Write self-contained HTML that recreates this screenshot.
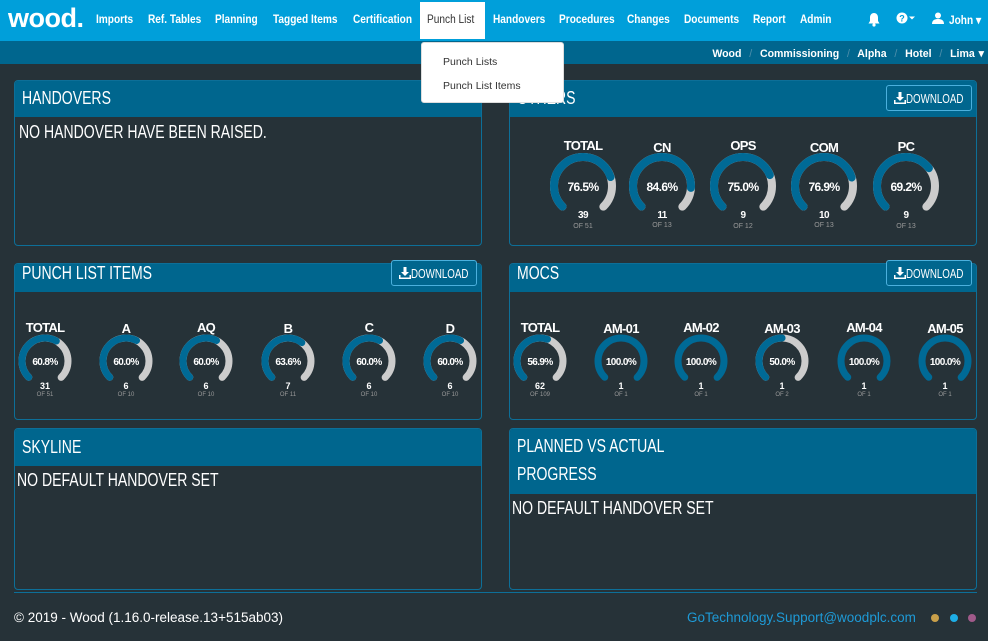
<!DOCTYPE html>
<html><head><meta charset="utf-8"><style>
*{margin:0;padding:0;box-sizing:border-box}
body{width:988px;height:641px;background:#263238;font-family:"Liberation Sans",sans-serif;position:relative;overflow:hidden;color:#fff}
.n{display:inline-block;transform:scaleX(.78);transform-origin:left center;white-space:nowrap}
.nav{position:absolute;left:0;top:0;width:988px;height:41px;background:#009fda}
.nav .logo{position:absolute;left:8px;top:3px;font-size:27px;font-weight:bold;letter-spacing:-0.5px;color:#fff}
.nav a{position:absolute;top:14px;font-size:11.5px;font-weight:bold;color:#fff;white-space:nowrap;transform:scaleX(.88);transform-origin:left center}
.pl{position:absolute;left:420px;top:2px;width:65px;height:37px;background:#fff}
.sub{position:absolute;left:0;top:41px;width:988px;height:23px;background:#00668e}
.bc{position:absolute;right:4px;top:47px;font-size:11px;font-weight:bold;color:#fff;white-space:nowrap;transform:scaleX(.96);transform-origin:right center;word-spacing:1px}
.sl{color:#4f8fab;font-weight:normal}
.dd{position:absolute;left:421px;top:42px;width:143px;height:61px;background:#fff;border-radius:3px;border:1px solid #ddd}
.dd div{position:absolute;left:21px;font-size:10.5px;color:#333}
.panel{position:absolute;border:1px solid #0d6f98;border-radius:4px;background:#263238;overflow:hidden}
.ph{background:#00668e;font-size:18px;color:#fff;padding-left:7px}
.pb{font-size:18px;color:#fff}
.btn{position:absolute;width:86px;height:26px;border:1px solid #4bb0dd;border-radius:3px;font-size:13px;color:#fff;padding:5px 0 0 7px;background:#00668e;white-space:nowrap}
.btn svg{vertical-align:-1px}
.btn span{display:inline-block;transform:scaleX(.75);transform-origin:left center}
svg text{font-family:"Liberation Sans",sans-serif;font-weight:bold;fill:#fff;text-anchor:middle}
</style></head><body>
<div class="nav">
<div class="logo">wood.</div>
<a style="left:96px">Imports</a>
<a style="left:148px">Ref. Tables</a>
<a style="left:215px">Planning</a>
<a style="left:273px">Tagged Items</a>
<a style="left:353px">Certification</a>
<div class="pl"></div>
<a style="left:427px;color:#333;font-weight:normal">Punch List</a>
<a style="left:493px">Handovers</a>
<a style="left:559px">Procedures</a>
<a style="left:627px">Changes</a>
<a style="left:684px">Documents</a>
<a style="left:753px">Report</a>
<a style="left:800px">Admin</a>
<svg style="position:absolute;left:867px;top:12px" width="14" height="15" viewBox="0 0 14 15"><path d="M7 1C4.5 1 3 3 3 5.5V9L1.5 11.5H12.5L11 9V5.5C11 3 9.5 1 7 1Z" fill="#fff"/><circle cx="7" cy="13" r="1.6" fill="#fff"/></svg>
<svg style="position:absolute;left:896px;top:12px" width="22" height="12" viewBox="0 0 22 12"><circle cx="6" cy="6" r="5.5" fill="#fff"/><text x="6" y="9.5" style="font-size:9px;fill:#009fda">?</text><path d="M13 4.5h6l-3 3z" fill="#fff"/></svg>
<svg style="position:absolute;left:932px;top:12px" width="12" height="12" viewBox="0 0 12 12"><circle cx="6" cy="3.5" r="3" fill="#fff"/><path d="M0 12C0 8 3 7 6 7S12 8 12 12Z" fill="#fff"/></svg>
<a style="left:949px;top:13px">John ▾</a>
</div>
<div class="sub"></div>
<div class="bc">Wood <span class="sl">&nbsp;/&nbsp;</span> Commissioning <span class="sl">&nbsp;/&nbsp;</span> Alpha <span class="sl">&nbsp;/&nbsp;</span> Hotel <span class="sl">&nbsp;/&nbsp;</span> Lima ▾</div>

<div class="panel" style="left:14px;top:80px;width:468px;height:166px"><div class="ph" style="height:36px;line-height:34px"><span class="n">HANDOVERS</span></div><div class="pb" style="padding:5px 4px"><span class="n">NO HANDOVER HAVE BEEN RAISED.</span></div></div>
<div class="panel" style="left:509px;top:80px;width:468px;height:166px"><div class="ph" style="height:36px;line-height:34px"><span class="n">OTHERS</span></div></div>
<div class="btn" style="left:886px;top:85px"><svg width="12" height="12" viewBox="0 0 12 12"><path d="M4.5 0h3v5h2.5L6 9 2 5h2.5z M0 8h1.5v2.5h9V8H12v4H0z" fill="#fff"/></svg><span>DOWNLOAD</span></div>
<div class="panel" style="left:14px;top:263px;width:468px;height:157px"><div class="ph" style="height:28px;line-height:18px"><span class="n">PUNCH LIST ITEMS</span></div></div>
<div class="btn" style="left:391px;top:260px"><svg width="12" height="12" viewBox="0 0 12 12"><path d="M4.5 0h3v5h2.5L6 9 2 5h2.5z M0 8h1.5v2.5h9V8H12v4H0z" fill="#fff"/></svg><span>DOWNLOAD</span></div>
<div class="panel" style="left:509px;top:263px;width:468px;height:157px"><div class="ph" style="height:28px;line-height:18px"><span class="n">MOCS</span></div></div>
<div class="btn" style="left:886px;top:260px"><svg width="12" height="12" viewBox="0 0 12 12"><path d="M4.5 0h3v5h2.5L6 9 2 5h2.5z M0 8h1.5v2.5h9V8H12v4H0z" fill="#fff"/></svg><span>DOWNLOAD</span></div>
<div class="panel" style="left:14px;top:428px;width:468px;height:162px"><div class="ph" style="height:37px;line-height:36px"><span class="n">SKYLINE</span></div><div class="pb" style="padding:4px 2px"><span class="n">NO DEFAULT HANDOVER SET</span></div></div>
<div class="panel" style="left:509px;top:428px;width:468px;height:162px"><div class="ph" style="height:65px;line-height:28px;padding-top:3px"><span class="n">PLANNED VS ACTUAL</span><br><span class="n">PROGRESS</span></div><div class="pb" style="padding:4px 2px"><span class="n">NO DEFAULT HANDOVER SET</span></div></div>
<div class="dd"><div style="top:13px">Punch Lists</div><div style="top:37px">Punch List Items</div></div>
<div style="position:absolute;left:14px;top:592px;width:963px;height:1px;background:#0d6f98"></div>
<div style="position:absolute;left:14px;top:610px;font-size:13.5px;color:#fff">© 2019 - Wood (1.16.0-release.13+515ab03)</div>
<div style="position:absolute;left:687px;top:610px;font-size:13.5px;color:#1e9ad6">GoTechnology.Support@woodplc.com</div>
<div style="position:absolute;left:931px;top:614px;width:8px;height:8px;border-radius:50%;background:#c9a04a"></div>
<div style="position:absolute;left:950px;top:614px;width:8px;height:8px;border-radius:50%;background:#1eaee6"></div>
<div style="position:absolute;left:968px;top:614px;width:8px;height:8px;border-radius:50%;background:#a05a8a"></div>

<svg width="988" height="641" style="position:absolute;left:0;top:0" fill="none">
<g stroke-width="8" stroke-linecap="round">
<circle cx="583" cy="186" r="29" stroke="#ccc" stroke-dasharray="136.7 200" transform="rotate(135 583 186)"/><circle cx="583" cy="186" r="29" stroke="#006a96" stroke-dasharray="104.6 200" transform="rotate(135 583 186)"/>
<circle cx="662" cy="186" r="29" stroke="#ccc" stroke-dasharray="136.7 200" transform="rotate(135 662 186)"/><circle cx="662" cy="186" r="29" stroke="#006a96" stroke-dasharray="115.6 200" transform="rotate(135 662 186)"/>
<circle cx="743" cy="186" r="29" stroke="#ccc" stroke-dasharray="136.7 200" transform="rotate(135 743 186)"/><circle cx="743" cy="186" r="29" stroke="#006a96" stroke-dasharray="102.5 200" transform="rotate(135 743 186)"/>
<circle cx="824" cy="186" r="29" stroke="#ccc" stroke-dasharray="136.7 200" transform="rotate(135 824 186)"/><circle cx="824" cy="186" r="29" stroke="#006a96" stroke-dasharray="105.1 200" transform="rotate(135 824 186)"/>
<circle cx="906" cy="186" r="29" stroke="#ccc" stroke-dasharray="136.7 200" transform="rotate(135 906 186)"/><circle cx="906" cy="186" r="29" stroke="#006a96" stroke-dasharray="94.6 200" transform="rotate(135 906 186)"/>
</g>
<g stroke-width="7" stroke-linecap="round">
<circle cx="45" cy="361" r="23" stroke="#ccc" stroke-dasharray="108.4 200" transform="rotate(135 45 361)"/><circle cx="45" cy="361" r="23" stroke="#006a96" stroke-dasharray="65.9 200" transform="rotate(135 45 361)"/>
<circle cx="126" cy="361" r="23" stroke="#ccc" stroke-dasharray="108.4 200" transform="rotate(135 126 361)"/><circle cx="126" cy="361" r="23" stroke="#006a96" stroke-dasharray="65 200" transform="rotate(135 126 361)"/>
<circle cx="206" cy="361" r="23" stroke="#ccc" stroke-dasharray="108.4 200" transform="rotate(135 206 361)"/><circle cx="206" cy="361" r="23" stroke="#006a96" stroke-dasharray="65 200" transform="rotate(135 206 361)"/>
<circle cx="288" cy="361" r="23" stroke="#ccc" stroke-dasharray="108.4 200" transform="rotate(135 288 361)"/><circle cx="288" cy="361" r="23" stroke="#006a96" stroke-dasharray="68.9 200" transform="rotate(135 288 361)"/>
<circle cx="369" cy="361" r="23" stroke="#ccc" stroke-dasharray="108.4 200" transform="rotate(135 369 361)"/><circle cx="369" cy="361" r="23" stroke="#006a96" stroke-dasharray="65 200" transform="rotate(135 369 361)"/>
<circle cx="450" cy="361" r="23" stroke="#ccc" stroke-dasharray="108.4 200" transform="rotate(135 450 361)"/><circle cx="450" cy="361" r="23" stroke="#006a96" stroke-dasharray="65 200" transform="rotate(135 450 361)"/>
<circle cx="540" cy="361" r="23" stroke="#ccc" stroke-dasharray="108.4 200" transform="rotate(135 540 361)"/><circle cx="540" cy="361" r="23" stroke="#006a96" stroke-dasharray="61.7 200" transform="rotate(135 540 361)"/>
<circle cx="621" cy="361" r="23" stroke="#006a96" stroke-dasharray="108.4 200" transform="rotate(135 621 361)"/>
<circle cx="701" cy="361" r="23" stroke="#006a96" stroke-dasharray="108.4 200" transform="rotate(135 701 361)"/>
<circle cx="782" cy="361" r="23" stroke="#ccc" stroke-dasharray="108.4 200" transform="rotate(135 782 361)"/><circle cx="782" cy="361" r="23" stroke="#006a96" stroke-dasharray="54.2 200" transform="rotate(135 782 361)"/>
<circle cx="864" cy="361" r="23" stroke="#006a96" stroke-dasharray="108.4 200" transform="rotate(135 864 361)"/>
<circle cx="945" cy="361" r="23" stroke="#006a96" stroke-dasharray="108.4 200" transform="rotate(135 945 361)"/>
</g>
<g font-size="13" letter-spacing="-0.7">
<text x="583" y="150">TOTAL</text><text x="662" y="152">CN</text><text x="743" y="150">OPS</text><text x="824" y="152">COM</text><text x="906" y="151">PC</text>
<text x="45" y="332">TOTAL</text><text x="126" y="333">A</text><text x="206" y="332">AQ</text><text x="288" y="333">B</text><text x="369" y="332">C</text><text x="450" y="333">D</text>
<text x="540" y="332">TOTAL</text><text x="621" y="333">AM-01</text><text x="701" y="332">AM-02</text><text x="782" y="333">AM-03</text><text x="864" y="332">AM-04</text><text x="945" y="333">AM-05</text>
</g>
<g font-size="12" letter-spacing="-0.6">
<text x="583" y="191">76.5%</text><text x="662" y="191">84.6%</text><text x="743" y="191">75.0%</text><text x="824" y="191">76.9%</text><text x="906" y="191">69.2%</text>
</g>
<g font-size="10" letter-spacing="-0.6">
<text x="45" y="365">60.8%</text><text x="126" y="365">60.0%</text><text x="206" y="365">60.0%</text><text x="288" y="365">63.6%</text><text x="369" y="365">60.0%</text><text x="450" y="365">60.0%</text>
<text x="540" y="365">56.9%</text><text x="621" y="365">100.0%</text><text x="701" y="365">100.0%</text><text x="782" y="365">50.0%</text><text x="864" y="365">100.0%</text><text x="945" y="365">100.0%</text>
<text x="583" y="218">39</text><text x="662" y="218">11</text><text x="743" y="218">9</text><text x="824" y="218">10</text><text x="906" y="218">9</text>
</g>
<g font-size="9">
<text x="45" y="389">31</text><text x="126" y="389">6</text><text x="206" y="389">6</text><text x="288" y="389">7</text><text x="369" y="389">6</text><text x="450" y="389">6</text>
<text x="540" y="389">62</text><text x="621" y="389">1</text><text x="701" y="389">1</text><text x="782" y="389">1</text><text x="864" y="389">1</text><text x="945" y="389">1</text>
</g>
<g font-size="7">
<text x="583" y="228" style="fill:#999;font-weight:normal">OF 51</text><text x="662" y="227" style="fill:#999;font-weight:normal">OF 13</text><text x="743" y="228" style="fill:#999;font-weight:normal">OF 12</text><text x="824" y="227" style="fill:#999;font-weight:normal">OF 13</text><text x="906" y="228" style="fill:#999;font-weight:normal">OF 13</text>
<g style="font-size:6px">
<text x="45" y="396" style="fill:#999;font-weight:normal">OF 51</text><text x="126" y="396" style="fill:#999;font-weight:normal">OF 10</text><text x="206" y="396" style="fill:#999;font-weight:normal">OF 10</text><text x="288" y="396" style="fill:#999;font-weight:normal">OF 11</text><text x="369" y="396" style="fill:#999;font-weight:normal">OF 10</text><text x="450" y="396" style="fill:#999;font-weight:normal">OF 10</text>
<text x="540" y="396" style="fill:#999;font-weight:normal">OF 109</text><text x="621" y="396" style="fill:#999;font-weight:normal">OF 1</text><text x="701" y="396" style="fill:#999;font-weight:normal">OF 1</text><text x="782" y="396" style="fill:#999;font-weight:normal">OF 2</text><text x="864" y="396" style="fill:#999;font-weight:normal">OF 1</text><text x="945" y="396" style="fill:#999;font-weight:normal">OF 1</text>
</g></g>
</svg>
</body></html>
